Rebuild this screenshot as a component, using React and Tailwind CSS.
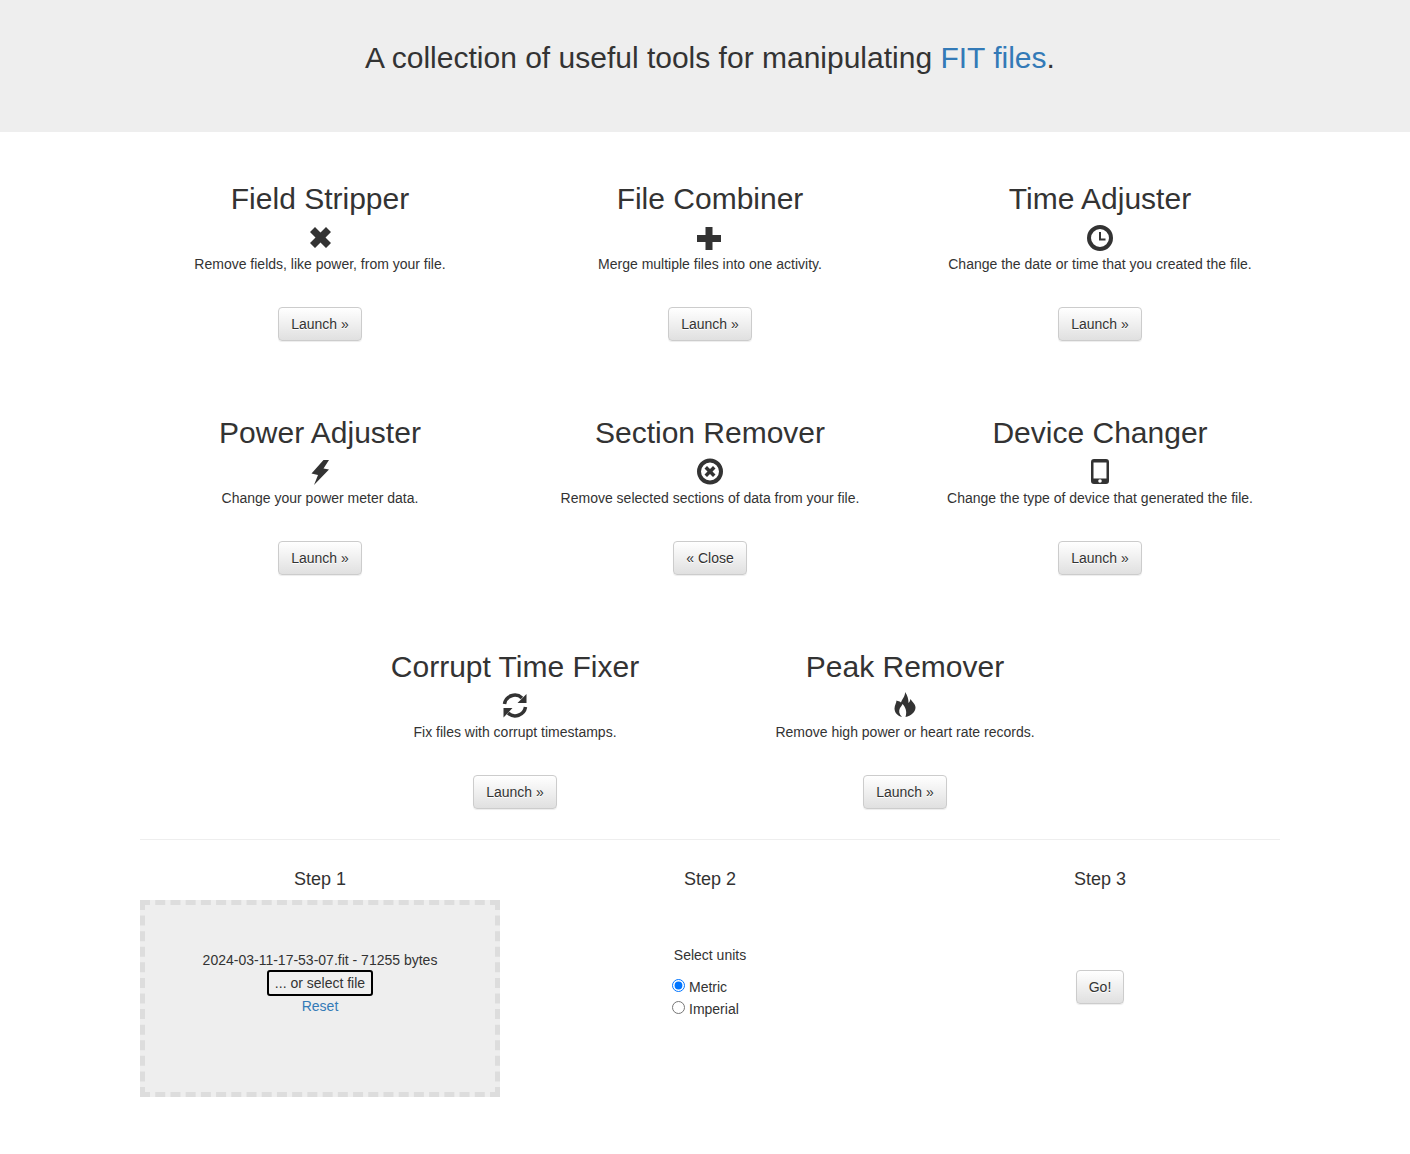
const ICON_COLOR = '#333333'

const icons = {
    remove: <polygon points="10,3 15.5,8.5 21,3 26,8 20.5,13.5 26,19 21,24 15.5,18.5 10,24 5,19 10.5,13.5 5,8" />,
    plus: <polygon points="10.5,3 17.5,3 17.5,11 26,11 26,18 17.5,18 17.5,26 10.5,26 10.5,18 2,18 2,11 10.5,11" />,
    clock: (
        <>
            <circle cx="15" cy="14" r="11" fill="none" stroke={ICON_COLOR} strokeWidth="4" />
            <polygon points="14,8 16,8 16,14.5 20.5,14.5 20.5,16.5 14,16.5" />
        </>
    ),
    flash: <polygon points="18.5,2 24,2 18.5,10.5 24,11.5 9,27 13,17 6.5,15.5" />,
    removeCircle: (
        <>
            <circle cx="15" cy="13.5" r="11" fill="none" stroke={ICON_COLOR} strokeWidth="4" />
            <polygon points="12,8 15,11 18,8 20.5,10.5 17.5,13.5 20.5,16.5 18,19 15,16 12,19 9.5,16.5 12.5,13.5 9.5,10.5" />
        </>
    ),
    phone: (
        <path
            fillRule="evenodd"
            d="M9 1h12a3 3 0 0 1 3 3v19a3 3 0 0 1-3 3H9a3 3 0 0 1-3-3V4a3 3 0 0 1 3-3zM8.5 4.5v16h13v-16zM15 21.2a1.8 1.8 0 1 0 0 3.6 1.8 1.8 0 0 0 0-3.6z"
        />
    ),
    refresh: (
        <>
            <path d="M4.5 12A10.5 10.5 0 0 1 22 6" fill="none" stroke={ICON_COLOR} strokeWidth="3.5" />
            <polygon points="26.5,2 26.5,11 17.5,11" />
            <path d="M25.5 15A10.5 10.5 0 0 1 8 21" fill="none" stroke={ICON_COLOR} strokeWidth="3.5" />
            <polygon points="3.5,25.5 3.5,16 12.5,16" />
        </>
    ),
    fire: <path d="M15 0C15.5 4 12 7 11 10.5C10 9.5 8 9 6.5 8.5C6.5 11 4.5 13 4.5 16.5C4.5 21 8 24 12 25C9 22 8.5 19 10 16C11 14.5 12 13.5 12.5 12C15 14.5 17.5 19 15.5 25C21 24 25.5 20 25.5 15.5C25.5 12 22 10 20.5 7C20 9 19.5 10 18.5 11C18.5 7 17.5 3 15 0Z" />,
}

const ROWS = [
    [
        { title: 'Field Stripper', icon: 'remove', text: 'Remove fields, like power, from your file.', action: 'Launch »' },
        { title: 'File Combiner', icon: 'plus', text: 'Merge multiple files into one activity.', action: 'Launch »' },
        { title: 'Time Adjuster', icon: 'clock', text: 'Change the date or time that you created the file.', action: 'Launch »' },
    ],
    [
        { title: 'Power Adjuster', icon: 'flash', text: 'Change your power meter data.', action: 'Launch »' },
        { title: 'Section Remover', icon: 'removeCircle', text: 'Remove selected sections of data from your file.', action: '« Close' },
        { title: 'Device Changer', icon: 'phone', text: 'Change the type of device that generated the file.', action: 'Launch »' },
    ],
    [
        { title: 'Corrupt Time Fixer', icon: 'refresh', text: 'Fix files with corrupt timestamps.', action: 'Launch »' },
        { title: 'Peak Remover', icon: 'fire', text: 'Remove high power or heart rate records.', action: 'Launch »' },
    ],
]

function Btn({ children }) {
    return (
        <button className="h-[34px] px-3 border border-[#ccc] rounded-[4px] text-sm text-[#333] bg-[linear-gradient(to_bottom,#fff_0,#e0e0e0_100%)] [text-shadow:0_1px_0_#fff] shadow-[inset_0_1px_0_rgba(255,255,255,0.15),0_1px_1px_rgba(0,0,0,0.075)]">
            {children}
        </button>
    )
}

function Tool({ tool }) {
    return (
        <div className="w-[390px] px-[15px] pb-[30px] flex flex-col items-center text-center">
            <h2 className="mt-5 mb-[10px] text-[30px] leading-[33px] font-medium">{tool.title}</h2>
            <div className="h-[29px]">
                <svg width="30" height="30" viewBox="0 0 30 30" fill={ICON_COLOR} className="block -mt-px">
                    {icons[tool.icon]}
                </svg>
            </div>
            <p className="text-sm leading-5 mb-[33px]">{tool.text}</p>
            <Btn>{tool.action}</Btn>
        </div>
    )
}

function Step({ title, children }) {
    return (
        <div className="w-[390px] px-[15px] flex flex-col items-center">
            <h4 className="text-lg leading-5 font-medium mb-[11px]">{title}</h4>
            {children}
        </div>
    )
}

export default function App() {
    return (
        <div className="w-[1410px] min-h-[1154px] overflow-hidden bg-white">
            <div className="w-[1420px] text-[#333] font-['Liberation_Sans',Arial,sans-serif]">
                <div className="h-[132px] bg-[#eee] pt-[41px] text-center">
                    <h2 className="text-[30px] leading-[33px] font-medium">
                        A collection of useful tools for manipulating <a className="text-[#337ab7]">FIT files</a>.
                    </h2>
                </div>

                <div className="w-[1170px] mx-auto pt-[30px]">
                    <div className="flex flex-col gap-[25px]">
                        {ROWS.map((row, i) => (
                            <div key={i} className="flex justify-center">
                                {row.map((tool) => (
                                    <Tool key={tool.title} tool={tool} />
                                ))}
                            </div>
                        ))}
                    </div>

                    <div className="mx-[15px] border-t border-[#eee] h-[30px]" />

                    <div className="flex">
                        <Step title="Step 1">
                            <div className="w-[360px] h-[197px] border-[5px] border-dashed border-[#ddd] bg-[#eee] pt-[45px] flex flex-col items-center text-sm leading-5">
                                <div>2024-03-11-17-53-07.fit - 71255 bytes</div>
                                <button className="px-[6px] py-px border-2 border-black rounded-[3px] bg-[#efefef] text-sm leading-5">
                                    ... or select file
                                </button>
                                <a className="text-[#337ab7]">Reset</a>
                            </div>
                        </Step>
                        <Step title="Step 2">
                            <div className="pt-[45px] flex flex-col items-center text-sm leading-5">
                                <div className="mb-3">Select units</div>
                                <div className="w-[76px] flex flex-col gap-[2px]">
                                    <label className="flex gap-1">
                                        <input type="radio" name="units" defaultChecked className="w-[13px] h-[13px] mt-[2px]" />
                                        Metric
                                    </label>
                                    <label className="flex gap-1">
                                        <input type="radio" name="units" className="w-[13px] h-[13px] mt-[2px]" />
                                        Imperial
                                    </label>
                                </div>
                            </div>
                        </Step>
                        <Step title="Step 3">
                            <div className="pt-[70px]">
                                <Btn>Go!</Btn>
                            </div>
                        </Step>
                    </div>
                </div>
            </div>
        </div>
    )
}
